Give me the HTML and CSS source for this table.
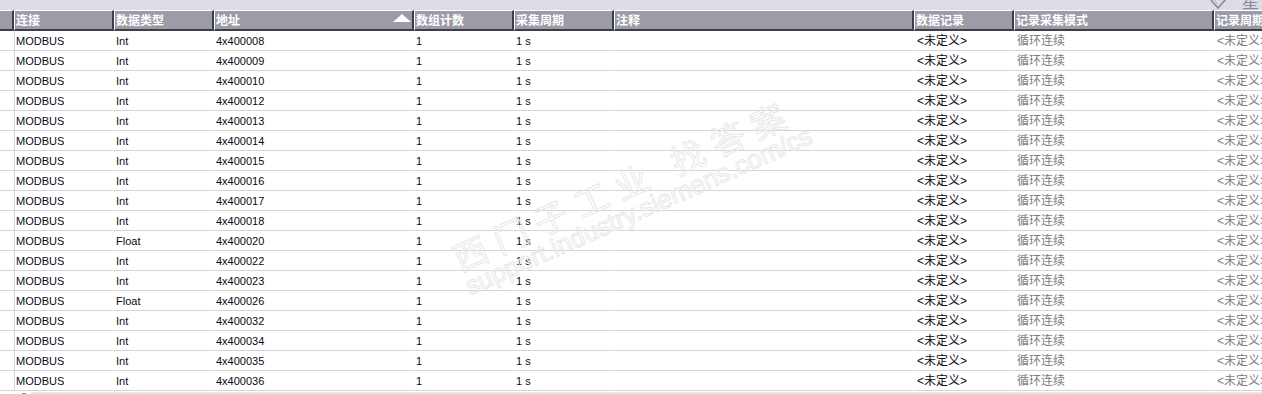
FILE: index.html
```html
<!DOCTYPE html>
<html lang="zh-CN">
<head>
<meta charset="utf-8">
<title>变量记录</title>
<link rel="stylesheet" href="styles.css">
</head>
<body>
<div class="page">
  <div class="topbar">
    <div class="tool">
      <svg class="tool-icon" width="18" height="10" viewBox="0 0 18 10"><path d="M1 0 L8 8 L16 -1" fill="none" stroke="#8a8a92" stroke-width="1.6"/><path d="M4 0 L8 4" fill="none" stroke="#b0b0b8" stroke-width="1"/></svg>
      <span class="tool-label">星</span>
    </div>
  </div>
  <div class="grid">
    <div class="row head">
      <div class="hc rh"></div>
      <div class="hc w1">连接</div>
      <div class="hc w1">数据类型</div>
      <div class="hc w2 sorted">地址<span class="sort-arrow"></span></div>
      <div class="hc w1">数组计数</div>
      <div class="hc w1">采集周期</div>
      <div class="hc w3">注释</div>
      <div class="hc w1">数据记录</div>
      <div class="hc w2">记录采集模式</div>
      <div class="hc w1">记录周期</div>
    </div>
  </div>
  <div class="grid body" id="rows"></div>
  <div class="hscroll"><span class="hs-mark"></span><div class="hs-track"></div></div>
  <div class="watermark">
    <span class="wm-cn">西门子工业 找答案</span>
    <span class="wm-url">support.industry.siemens.com/cs</span>
  </div>
</div>
<script src="app.js"></script>
</body>
</html>
```
FILE: app.js
```js
const data = [
  ["Int","4x400008"],["Int","4x400009"],["Int","4x400010"],["Int","4x400012"],
  ["Int","4x400013"],["Int","4x400014"],["Int","4x400015"],["Int","4x400016"],
  ["Int","4x400017"],["Int","4x400018"],["Float","4x400020"],["Int","4x400022"],
  ["Int","4x400023"],["Float","4x400026"],["Int","4x400032"],["Int","4x400034"],
  ["Int","4x400035"],["Int","4x400036"]
];
const rows = document.getElementById("rows");
rows.innerHTML = data.map(([t, a]) => `
  <div class="row">
    <div class="dc rh"></div>
    <div class="dc w1 first">MODBUS</div>
    <div class="dc w1">${t}</div>
    <div class="dc w2">${a}</div>
    <div class="dc w1">1</div>
    <div class="dc w1">1 s</div>
    <div class="dc w3"></div>
    <div class="dc w1 cjk">&lt;未定义&gt;</div>
    <div class="dc w2 cjk dim">循环连续</div>
    <div class="dc w1 cjk dim">&lt;未定义&gt;</div>
  </div>`).join("");
```
FILE: styles.css
```css
html, body {
  margin: 0;
  padding: 0;
  background: #ffffff;
  overflow: hidden;
}
.page {
  position: relative;
  width: 1262px;
  height: 394px;
  overflow: hidden;
  font-family: "Liberation Sans", "Noto Sans CJK SC", sans-serif;
}
.topbar {
  height: 10px;
  background: #dcdce6;
  display: flex;
  justify-content: flex-end;
  overflow: hidden;
}
.tool {
  display: flex;
  align-items: flex-start;
  gap: 14px;
  width: 52px;
}
.tool-icon {
  display: block;
}
.tool-label {
  font-family: "Noto Sans CJK SC", sans-serif;
  font-size: 17px;
  line-height: 17px;
  margin-top: -8px;
  color: #8a8a92;
}
.grid {
  width: 1400px;
}
.row {
  display: flex;
  height: 20px;
}
.row.head {
  height: 21px;
}
.hc {
  box-sizing: border-box;
  flex: none;
  height: 21px;
  background: #9c9ca8;
  border-top: 1px solid #ffffff;
  border-left: 1px solid #ffffff;
  border-right: 2px solid #3e3e48;
  border-bottom: 2px solid #3e3e48;
  padding-left: 1px;
  color: #ffffff;
  font-family: "Noto Sans CJK SC", sans-serif;
  font-weight: bold;
  font-size: 12px;
  line-height: 17px;
  white-space: nowrap;
  overflow: hidden;
}
.hc.rh {
  width: 14px;
  border-left: none;
}
.w1 { width: 100px; }
.w2 { width: 200px; }
.w3 { width: 300px; }
.sorted {
  display: flex;
  justify-content: space-between;
  align-items: flex-start;
  padding-right: 1px;
}
.sort-arrow {
  width: 0;
  height: 0;
  margin-top: 3px;
  border-left: 9px solid transparent;
  border-right: 9px solid transparent;
  border-bottom: 8px solid #ffffff;
}
.dc {
  box-sizing: border-box;
  flex: none;
  height: 20px;
  padding-left: 2px;
  font-size: 11px;
  line-height: 20px;
  color: #0a0a14;
  white-space: nowrap;
  overflow: hidden;
  background: linear-gradient(#d4d4d4, #d4d4d4) no-repeat left bottom / calc(100% - 1px) 1px;
}
.dc.rh {
  width: 14px;
  padding: 0;
  background: linear-gradient(#d4d4d4, #d4d4d4) no-repeat left bottom / 100% 1px;
}
.dc.first {
  border-left: 1px solid #d4d4d4;
  padding-left: 1px;
}
.dc.cjk {
  font-size: 12px;
  padding-left: 3px;
}
.dc.dim {
  color: #7c7c7c;
}
.hscroll {
  display: flex;
  height: 4px;
  margin-top: 1px;
}
.hs-mark {
  flex: none;
  width: 31px;
  background: linear-gradient(#909090, #909090) no-repeat 22px 1px / 4px 1px;
}
.hs-track {
  flex: 1;
  background: #e6e6e8;
}
.watermark {
  position: absolute;
  left: 0;
  top: 0;
  width: 100%;
  height: 100%;
  pointer-events: none;
}
.wm-cn, .wm-url {
  position: absolute;
  white-space: nowrap;
  color: transparent;
  -webkit-text-stroke: 1px #e8e8e8;
  transform-origin: 0 100%;
  transform: rotate(-24deg);
}
.wm-cn {
  left: 462px;
  top: 240px;
  font-family: "Noto Sans CJK SC", sans-serif;
  font-size: 34px;
  line-height: 36px;
  letter-spacing: 10px;
}
.wm-url {
  left: 472px;
  top: 272px;
  font-family: "Liberation Sans", sans-serif;
  font-size: 26px;
  line-height: 28px;
}
```
